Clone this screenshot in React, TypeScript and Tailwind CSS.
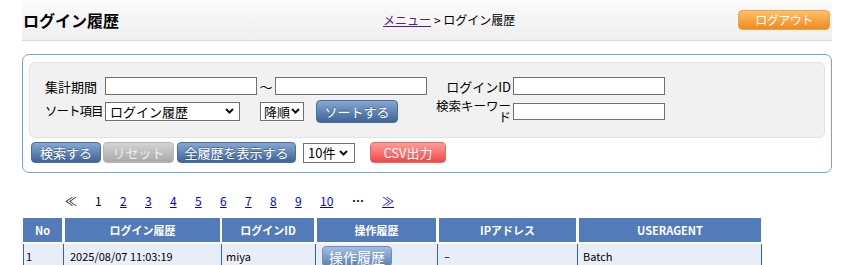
import React from "react";

const Chevron = () => (
  <svg width="9" height="6" viewBox="0 0 9 6" className="shrink-0">
    <path d="M1 1 L4.5 4.5 L8 1" fill="none" stroke="#111" strokeWidth="2" />
  </svg>
);

const blueBtn =
  "h-[21px] flex items-center justify-center rounded-[4px] border border-[#4a6f9f] bg-gradient-to-b from-[#86a7d3] to-[#3d6597] text-white text-[13px] leading-none [text-shadow:0_-1px_0_rgba(0,0,0,0.3)]";

export default function App() {
  const pages = ["2", "3", "4", "5", "6", "7", "8", "9"];
  return (
    <div
      className="w-[856px] h-[265px] overflow-hidden bg-white text-black"
      style={{ fontFamily: '"Noto Sans CJK JP", "Noto Sans", sans-serif' }}
    >
      {/* header */}
      <div className="ml-[22px] w-[810px] h-[41px] flex items-center border-b border-[#d9d9d9] bg-gradient-to-b from-[#fbfbfb] to-[#efefef]">
        <div className="w-[361px] pl-[1px] text-[16px] font-bold leading-none">ログイン履歴</div>
        <div className="text-[12px] leading-none flex items-center">
          <span className="text-[#551a8b] underline">メニュー</span>
          <span className="ml-[3px]">&gt; ログイン履歴</span>
        </div>
        <div className="flex-1" />
        <div className="mr-[2px] w-[92px] h-[20px] flex items-center justify-center rounded-[4px] border border-[#e9a64e] bg-gradient-to-b from-[#fdc066] to-[#ef8a16] text-white text-[12px] leading-none tracking-[-0.5px]">
          ログアウト
        </div>
      </div>

      {/* search box */}
      <div className="ml-[22px] mt-[13px] w-[810px] h-[119px] rounded-[7px] border border-[#79a0d8] px-[6px] pt-[7px]">
        <div className="h-[76px] rounded-[6px] border border-[#e2e2e2] bg-[#f1f1f1] pl-[15px] pt-[14px] flex text-[13px] leading-none">
          <div className="w-[382px] flex flex-col gap-[4px]">
            <div className="h-[18px] flex items-center">
              <div className="w-[60px] whitespace-nowrap">集計期間</div>
              <div className="w-[152px] h-[18px] border border-[#707070] bg-white" />
              <div className="w-[18px] text-center">〜</div>
              <div className="w-[152px] h-[18px] border border-[#707070] bg-white" />
            </div>
            <div className="h-[24px] flex items-center">
              <div className="w-[60px] whitespace-nowrap text-[12.5px] tracking-[-1px]">ソート項目</div>
              <div className="w-[135px] h-[19px] border border-[#707070] bg-white flex items-center justify-between pl-[4px] pr-[5px]">
                <span>ログイン履歴</span>
                <Chevron />
              </div>
              <div className="ml-[20px] w-[44px] h-[19px] border border-[#707070] bg-white flex items-center justify-between pl-[3px] pr-[3px]">
                <span>降順</span>
                <Chevron />
              </div>
              <div className={"ml-[12px] w-[82px] h-[23px] " + blueBtn}>ソートする</div>
            </div>
          </div>
          <div className="flex flex-col gap-[4px]">
            <div className="h-[18px] flex items-center">
              <div className="w-[84px] text-right">ログインID</div>
              <div className="ml-[2px] w-[152px] h-[18px] border border-[#707070] bg-white" />
            </div>
            <div className="h-[24px] flex items-center">
              <div className="w-[84px] text-right leading-[11px] text-[12.5px]">検索キーワード</div>
              <div className="ml-[2px] w-[152px] h-[17px] border border-[#707070] bg-white" />
            </div>
          </div>
        </div>
        <div className="mt-[4px] pl-[2px] flex items-center">
          <div className={"w-[70px] " + blueBtn}>検索する</div>
          <div className="ml-[2px] w-[71px] h-[21px] flex items-center justify-center rounded-[4px] border border-[#b5b5b5] bg-gradient-to-b from-[#d4d4d4] to-[#a9a9a9] text-[#eeeeee] text-[13px] leading-none">
            リセット
          </div>
          <div className={"ml-[3px] w-[119px] " + blueBtn}>全履歴を表示する</div>
          <div className="ml-[7px] w-[52px] h-[20px] border border-[#707070] bg-white flex items-center justify-between pl-[4px] pr-[6px] text-[13px] leading-none">
            <span>10件</span>
            <Chevron />
          </div>
          <div className="ml-[15px] w-[76px] h-[21px] flex items-center justify-center rounded-[4px] border border-[#e46a6a] bg-gradient-to-b from-[#ff9a9a] to-[#f04545] text-white text-[13px] leading-none">
            CSV出力
          </div>
        </div>
      </div>

      {/* pagination */}
      <div className="mt-[21px] pl-[65px] h-[14px] flex items-center text-[12px] leading-none">
        <span className="w-[30px]">≪</span>
        <span className="w-[25px]">1</span>
        {pages.map((p) => (
          <span key={p} className="w-[25px]">
            <span className="text-[#0000ee] underline">{p}</span>
          </span>
        ))}
        <span className="w-[32px]">
          <span className="text-[#0000ee] underline">10</span>
        </span>
        <span className="w-[30px] font-bold">…</span>
        <span className="text-[#0000ee] underline">≫</span>
      </div>

      {/* table */}
      <div className="ml-[23px] mt-[10px] w-[738px]">
        <div className="grid grid-cols-[42px_157px_95px_122px_140px_182px] h-[24px] text-white text-[11px] font-bold leading-none">
          {[
            ["No", "border-r-[3px]"],
            ["ログイン履歴", "border-r-[2px]"],
            ["ログインID", "border-r-[3px]"],
            ["操作履歴", "border-r-[3px]"],
            ["IPアドレス", "border-r-[3px]"],
            ["USERAGENT", ""],
          ].map(([t, b]) => (
            <div key={t} className={"bg-[#537bb9] border-white flex items-center justify-center " + b}>
              {t}
            </div>
          ))}
        </div>
        <div className="mt-[2px] grid grid-cols-[42px_157px_95px_122px_140px_182px] h-[24px] text-[11px] leading-none bg-[#e8eef8] border-l border-[#2a62c9]">
          <div className="pr-[2px]">
            <div className="h-full border-r border-[#2a62c9] flex items-center pl-[2px]">1</div>
          </div>
          <div className="pr-[1px]">
            <div className="h-full border-r border-[#2a62c9] flex items-center pl-[4px]">2025/08/07 11:03:19</div>
          </div>
          <div className="pr-[2px]">
            <div className="h-full border-r border-[#2a62c9] flex items-center pl-[3px]">miya</div>
          </div>
          <div className="pr-[2px]">
            <div className="h-full border-r border-[#2a62c9] flex items-start pl-[4px] pt-[2px]">
              <div className="w-[70px] h-[21px] flex items-center justify-center rounded-[4px] border border-[#6d8fbd] bg-gradient-to-b from-[#a3bde0] to-[#5e82b3] text-white text-[14px] leading-none">
                操作履歴
              </div>
            </div>
          </div>
          <div className="pr-[2px]">
            <div className="h-full border-r border-[#2a62c9] flex items-center pl-[4px]">–</div>
          </div>
          <div>
            <div className="h-full border-r border-[#2a62c9] flex items-center pl-[3px]">Batch</div>
          </div>
        </div>
      </div>
    </div>
  );
}
